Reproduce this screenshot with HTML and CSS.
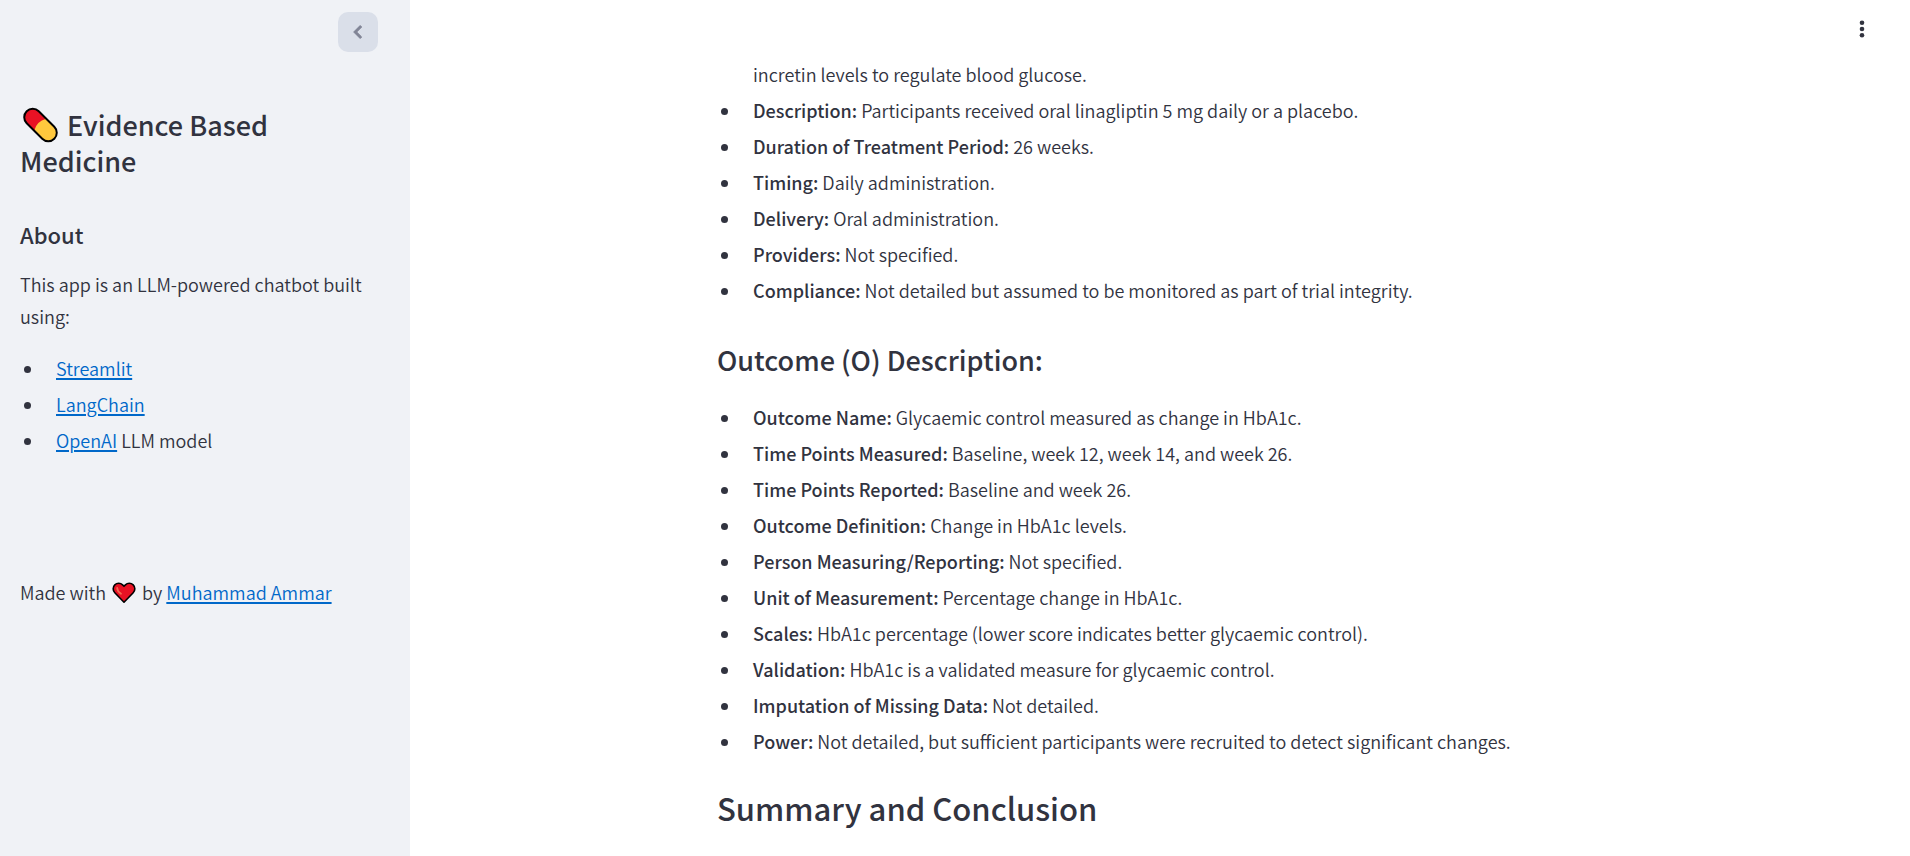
FILE: index.html
```html
<!DOCTYPE html>
<html lang="en">
<head>
<meta charset="utf-8">
<meta name="viewport" content="width=device-width, initial-scale=1">
<title>Evidence Based Medicine</title>
<link rel="stylesheet" href="styles.css">
</head>
<body>
<div class="app">
  <aside class="sidebar">
    <div class="sidebar-top">
      <button class="collapse" type="button" aria-label="Collapse sidebar">
        <svg width="26" height="26" viewBox="0 0 24 24" aria-hidden="true"><path d="M15.400 7.400 14 6l-6 6 6 6 1.400-1.400L10.800 12z" fill="currentColor" stroke="currentColor" stroke-width="0.900"/></svg>
      </button>
    </div>
    <div class="sidebar-body">
      <h1 class="title"><svg class="pill" width="38" height="36" viewBox="0 0 38 36" role="img" aria-label="Pill">
        <g transform="rotate(45 20.500 18)">
          <rect x="1" y="9.500" width="39" height="17" rx="8.500" fill="#ffc83d"/>
          <path d="M20 9.500H9.500a8.500 8.500 0 0 0 0 17H20q-5-8.500 0-17z" fill="#e81224"/>
          <rect x="1" y="9.500" width="39" height="17" rx="8.500" fill="none" stroke="#000" stroke-width="2"/>
        </g>
      </svg> Evidence Based Medicine</h1>
      <h2 class="subtitle">About</h2>
      <p class="text">This app is an LLM-powered chatbot built using:</p>
      <ul class="list">
        <li><a href="#streamlit">Streamlit</a></li>
        <li><a href="#langchain">LangChain</a></li>
        <li><a href="#openai">OpenAI</a> LLM model</li>
      </ul>
      <p class="text credit">Made with <svg class="heart" width="28" height="22" viewBox="-1 0 28 22" role="img" aria-label="love">
        <path d="M13 20.200 3.800 10.800a5.600 5.600 0 0 1 0-7.900 5.500 5.500 0 0 1 7.800 0L13 4.300l1.400-1.400a5.500 5.500 0 0 1 7.800 0 5.600 5.600 0 0 1 0 7.900z" fill="#e81224" stroke="#000" stroke-width="1.600" stroke-linejoin="round"/>
        <path d="M6.200 6q0 3.200 3.800 5.700" fill="none" stroke="#f4694f" stroke-width="1.800" stroke-linecap="round"/>
      </svg> by <a href="#author">Muhammad Ammar</a></p>
    </div>
  </aside>
  <main class="main">
    <header class="toolbar">
      <button class="menu" type="button" aria-label="Main menu">
        <svg width="20" height="20" viewBox="0 0 20 20" fill="currentColor" aria-hidden="true"><circle cx="10" cy="3.700" r="2.300"/><circle cx="10" cy="10" r="2.300"/><circle cx="10" cy="16.300" r="2.300"/></svg>
      </button>
    </header>
    <article class="message">
      <ul class="list">
        <li class="continued">incretin levels to regulate blood glucose.</li>
        <li><strong>Description:</strong> Participants received oral linagliptin 5 mg daily or a placebo.</li>
        <li><strong>Duration of Treatment Period:</strong> 26 weeks.</li>
        <li><strong>Timing:</strong> Daily administration.</li>
        <li><strong>Delivery:</strong> Oral administration.</li>
        <li><strong>Providers:</strong> Not specified.</li>
        <li><strong>Compliance:</strong> Not detailed but assumed to be monitored as part of trial integrity.</li>
      </ul>
      <h3 class="section">Outcome (O) Description:</h3>
      <ul class="list">
        <li><strong>Outcome Name:</strong> Glycaemic control measured as change in HbA1c.</li>
        <li><strong>Time Points Measured:</strong> Baseline, week 12, week 14, and week 26.</li>
        <li><strong>Time Points Reported:</strong> Baseline and week 26.</li>
        <li><strong>Outcome Definition:</strong> Change in HbA1c levels.</li>
        <li><strong>Person Measuring/Reporting:</strong> Not specified.</li>
        <li><strong>Unit of Measurement:</strong> Percentage change in HbA1c.</li>
        <li><strong>Scales:</strong> HbA1c percentage (lower score indicates better glycaemic control).</li>
        <li><strong>Validation:</strong> HbA1c is a validated measure for glycaemic control.</li>
        <li><strong>Imputation of Missing Data:</strong> Not detailed.</li>
        <li><strong>Power:</strong> Not detailed, but sufficient participants were recruited to detect significant changes.</li>
      </ul>
      <h2 class="summary">Summary and Conclusion</h2>
    </article>
  </main>
</div>
</body>
</html>
```
FILE: styles.css
```css
* {
  box-sizing: border-box;
}

body {
  margin: 0;
  background: #fff;
  color: #31333f;
  font-family: "Noto Sans CJK SC", "Noto Sans", sans-serif;
  font-size: 18px;
  font-weight: 350;
  line-height: 32px;
}

.app {
  display: flex;
  min-height: 100vh;
}

.sidebar {
  flex: 0 0 410px;
  background: #f0f2f6;
}

.sidebar-top {
  display: flex;
  justify-content: flex-end;
  padding: 12px 32px 0 0;
}

.collapse {
  display: grid;
  place-items: center;
  width: 40px;
  height: 40px;
  padding: 0;
  border: 0;
  border-radius: 10px;
  background: #dadfe9;
  color: #808495;
}

.sidebar-body {
  padding: 55px 32px 40px 20px;
}

h1,
h2,
h3,
p,
ul {
  margin: 0;
}

h1,
h2,
h3,
strong {
  font-weight: 500;
}

.title {
  font-size: 27px;
  line-height: 36px;
}

.pill {
  margin: 0 3px -3px 0;
  vertical-align: -4px;
}

.subtitle {
  margin-top: 39px;
  font-size: 22px;
  line-height: 32px;
}

.text {
  margin-top: 18px;
}

.sidebar .list {
  margin-top: 20px;
}

.credit {
  margin-top: 120px;
}

.heart {
  vertical-align: -4px;
}

a {
  color: #0068c9;
  text-decoration: underline;
  text-decoration-thickness: 2px;
  text-underline-offset: 2px;
}

.list {
  display: grid;
  gap: 4px;
  padding: 0 0 0 36px;
  list-style: none;
}

.list li::before {
  content: "";
  display: inline-block;
  width: 7px;
  height: 7px;
  margin: 0 25px 0 -32px;
  border-radius: 50%;
  background: #31333f;
  vertical-align: 3px;
}

.list .continued::before {
  display: none;
}

.main {
  flex: 1;
  min-width: 0;
}

.toolbar {
  display: flex;
  justify-content: flex-end;
  padding: 14px 33px 14px 0;
}

.menu {
  display: grid;
  place-items: center;
  width: 30px;
  height: 30px;
  padding: 0;
  border: 0;
  background: transparent;
  color: #31333f;
}

.message {
  max-width: 886px;
  margin: 0 auto;
}

.section {
  margin: 36px 0 23px;
  font-size: 27px;
  line-height: 36px;
}

.summary {
  padding: 29px 0 24px;
  font-size: 31px;
  line-height: 44px;
}
```
